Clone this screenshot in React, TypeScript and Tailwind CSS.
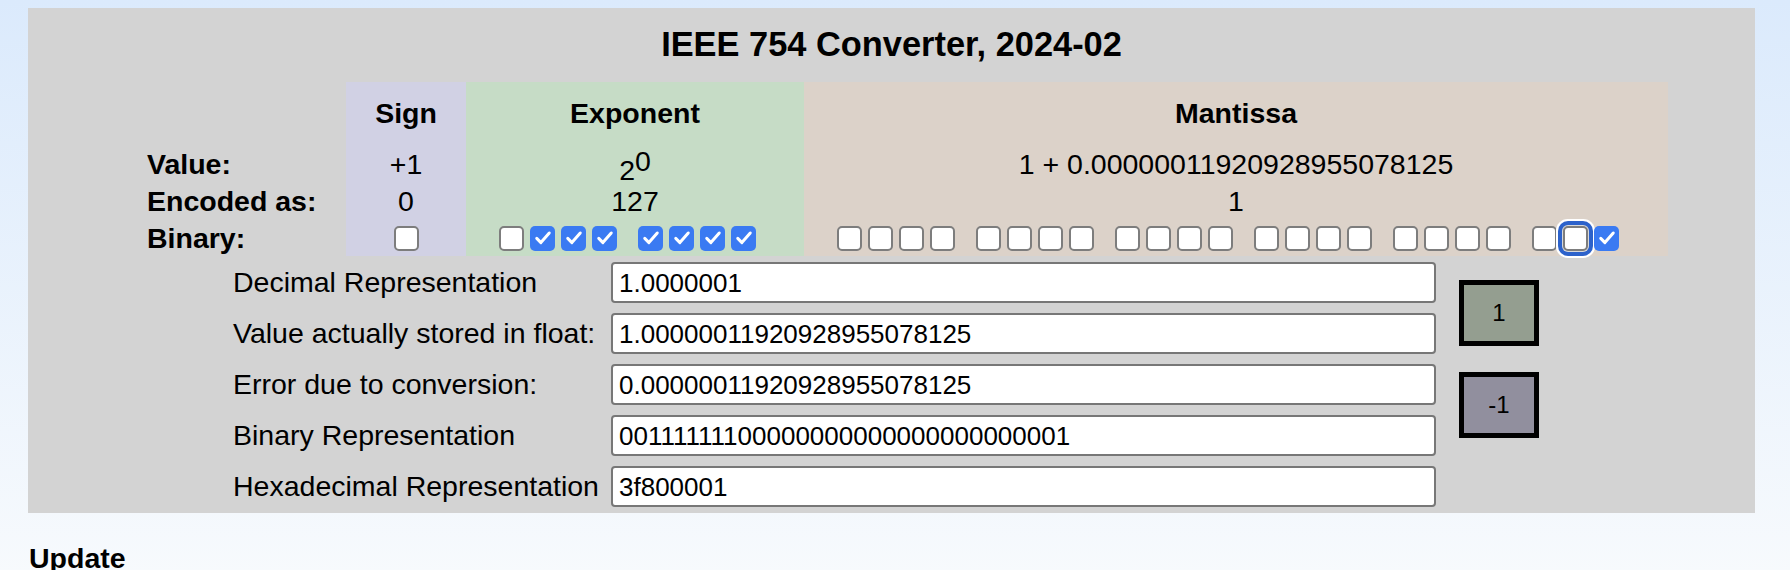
import React from "react";

const EXP = "01111111";
const MAN = "00000000000000000000001";

function Check() {
  return (
    <svg width="20" height="20" viewBox="0 0 24 24" fill="none">
      <path d="M4.5 12.5 L9.5 17.5 L19.5 6" stroke="white" strokeWidth="3.6" strokeLinecap="round" strokeLinejoin="round" />
    </svg>
  );
}

function Box({ checked, focused }: { checked: boolean; focused?: boolean }) {
  if (checked) {
    return (
      <span className="flex h-[25px] w-[25px] items-center justify-center rounded-[5px] bg-[#3a7af2]">
        <Check />
      </span>
    );
  }
  return (
    <span
      className={
        focused
          ? "block h-[25px] w-[25px] rounded-[5px] border-2 border-[#7d7d7d] bg-white shadow-[0_0_0_1px_#d9d9d9,0_0_0_5px_#2c62cb,0_0_0_7px_#ffffff]"
          : "block h-[25px] w-[25px] rounded-[5px] border-2 border-[#7d7d7d] bg-white"
      }
    />
  );
}

function Bits({ bits, focus }: { bits: string; focus?: number }) {
  const groups: { b: string; i: number }[][] = [];
  bits.split("").forEach((b, i) => {
    const g = Math.floor(i / 4);
    if (!groups[g]) groups[g] = [];
    groups[g].push({ b, i });
  });
  return (
    <div className="flex gap-[21px]">
      {groups.map((g, gi) => (
        <div key={gi} className="flex gap-[6px]">
          {g.map((x) => (
            <Box key={x.i} checked={x.b === "1"} focused={x.i === focus} />
          ))}
        </div>
      ))}
    </div>
  );
}

const rows = [
  ["Decimal Representation", "1.0000001"],
  ["Value actually stored in float:", "1.00000011920928955078125"],
  ["Error due to conversion:", "0.00000011920928955078125"],
  ["Binary Representation", "00111111100000000000000000000001"],
  ["Hexadecimal Representation", "3f800001"],
];

export default function App() {
  return (
    <div className="min-h-[570px] bg-[linear-gradient(to_bottom,#dbeafc,#f7fafd)] pt-[8px] font-['Liberation_Sans',Arial,Helvetica,sans-serif] text-black">
      <div className="ml-[28px] w-[1727px] bg-[#d3d3d3] pb-[6px] pt-[19px]">
        <h3 className="text-center text-[34.4px] font-bold leading-[34px]">IEEE 754 Converter, 2024-02</h3>

        <div className="ml-[119px] mt-[21px] grid grid-cols-[199px_120px_338px_864px] grid-rows-[63px_38px_37px_36px] text-[28.5px] leading-[33px]">
          <div />
          <div className="flex items-center justify-center bg-[#d1d1e4] font-bold">Sign</div>
          <div className="flex items-center justify-center bg-[#c6dcc6] font-bold">Exponent</div>
          <div className="flex items-center justify-center bg-[#dcd2c9] font-bold">Mantissa</div>

          <div className="flex items-center font-bold">Value:</div>
          <div className="flex items-center justify-center bg-[#d1d1e4]">+1</div>
          <div className="flex items-center justify-center bg-[#c6dcc6] pt-[4px]">
            <span>
              2<span className="align-[9px]">0</span>
            </span>
          </div>
          <div className="flex items-center justify-center bg-[#dcd2c9]">1 + 0.00000011920928955078125</div>

          <div className="flex items-center font-bold">Encoded as:</div>
          <div className="flex items-center justify-center bg-[#d1d1e4]">0</div>
          <div className="flex items-center justify-center bg-[#c6dcc6]">127</div>
          <div className="flex items-center justify-center bg-[#dcd2c9]">1</div>

          <div className="flex items-center font-bold">Binary:</div>
          <div className="flex items-center justify-center bg-[#d1d1e4]">
            <Box checked={false} />
          </div>
          <div className="flex items-center justify-center bg-[#c6dcc6] pr-[15px]">
            <Bits bits={EXP} />
          </div>
          <div className="flex items-center justify-center bg-[#dcd2c9] pr-[16px]">
            <Bits bits={MAN} focus={21} />
          </div>
        </div>

        <div className="ml-[205px] mt-[6px] flex">
          <div className="grid grid-cols-[378px_825px] gap-y-[10px]">
            {rows.map(([label, value]) => (
              <React.Fragment key={label}>
                <div className="flex h-[41px] items-center text-[28.5px] leading-[33px]">{label}</div>
                <div className="flex h-[41px] items-center rounded-[4px] border-2 border-[#777777] bg-white pl-[6px] text-[26px] leading-[30px]">
                  {value}
                </div>
              </React.Fragment>
            ))}
          </div>
          <div className="ml-[23px] flex flex-col gap-[26px] pt-[18px]">
            <div className="flex h-[66px] w-[80px] items-center justify-center border-[5px] border-black bg-[#949e90] text-[24px]">1</div>
            <div className="flex h-[66px] w-[80px] items-center justify-center border-[5px] border-black bg-[#918f9e] text-[24px]">-1</div>
          </div>
        </div>
      </div>
      <div className="ml-[29px] mt-[29px] text-[28.5px] font-bold leading-[33px]">Update</div>
    </div>
  );
}
